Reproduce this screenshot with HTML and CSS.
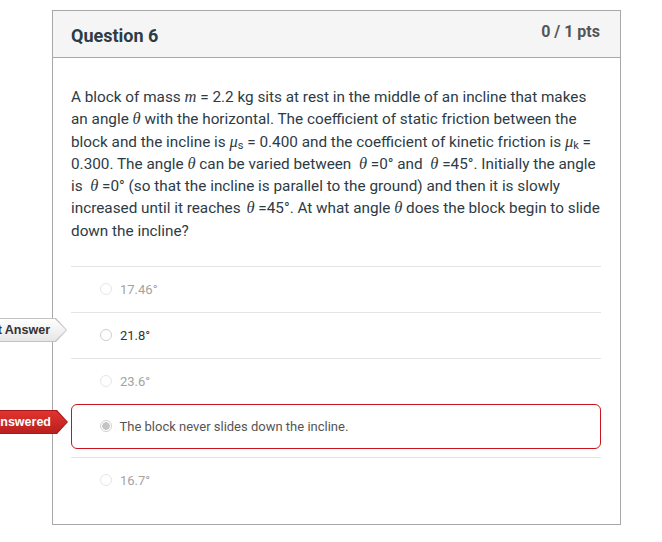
FILE: index.html
```html
<!DOCTYPE html>
<html>
<head>
<meta charset="utf-8">
<link rel="stylesheet" href="styles.css">
</head>
<body>
<div class="card">
  <div class="card-header">
    <h2 class="q-title">Question 6</h2>
    <div class="q-points">0 / 1 pts</div>
  </div>
  <div class="card-body">
    <p class="q-text">A block of mass <span class="mi">m</span> = 2.2 kg sits at rest in the middle of an incline that makes an angle <span class="mi">θ</span> with the horizontal. The coefficient of static friction between the block and the incline is <span class="mi">μ<sub>s</sub></span> = 0.400 and the coefficient of kinetic friction is <span class="mi">μ<sub>k</sub></span> = 0.300. The angle <span class="mi">θ</span> can be varied between &nbsp;<span class="mi">θ</span> =0° and &nbsp;<span class="mi">θ</span> =45°. Initially the angle is &nbsp;<span class="mi">θ</span> =0° (so that the incline is parallel to the ground) and then it is slowly increased until it reaches <span class="mi gap">θ</span> =45°. At what angle <span class="mi">θ</span> does the block begin to slide down the incline?</p>
    <div class="answers">
      <div class="answer faded"><span class="radio"></span><span class="label">17.46°</span></div>
      <div class="answer correct">
        <div class="tag tag-correct"><div class="tag-inner">Correct Answer</div></div>
        <span class="radio"></span><span class="label">21.8°</span>
      </div>
      <div class="answer faded"><span class="radio"></span><span class="label">23.6°</span></div>
      <div class="answer selected">
        <div class="tag tag-wrong"><div class="tag-inner">You Answered</div></div>
        <span class="radio checked"></span><span class="label">The block never slides down the incline.</span>
      </div>
      <div class="answer faded after-selected"><span class="radio"></span><span class="label">16.7°</span></div>
    </div>
  </div>
</div>
</body>
</html>
```
FILE: styles.css
```css
html, body {
  margin: 0;
  padding: 0;
  background: #fff;
  overflow: hidden;
}
body {
  font-family: Roboto, "Liberation Sans", sans-serif;
  color: #2d3b45;
}
.card {
  margin: 10px 0 0 52px;
  width: 567px;
  border: 1px solid #a8a8a8;
  background: #fff;
}
.card-header {
  height: 46px;
  background: #f5f5f5;
  border-bottom: 1px solid #a8a8a8;
  display: flex;
  justify-content: space-between;
  padding: 0 20px 0 18px;
}
.q-title {
  margin: 0;
  font-size: 18px;
  font-weight: 700;
  color: #2d3b45;
  line-height: 20px;
  padding-top: 15px;
}
.q-points {
  font-size: 16px;
  font-weight: 700;
  color: #555;
  line-height: 18px;
  padding-top: 12px;
}
.card-body {
  padding: 28px 19px 21px 18px;
}
.q-text {
  margin: 0 -4px 0 0;
  font-size: 15.3px;
  line-height: 22.3px;
  color: #2d3b45;
}
.mi {
  font-family: "Liberation Serif", "DejaVu Serif", serif;
  font-style: italic;
  font-size: 16.5px;
  line-height: 1;
}
.mi.gap {
  margin-left: 2px;
}
.mi sub {
  font-size: 11px;
  font-style: normal;
  font-family: Roboto, sans-serif;
  vertical-align: -2px;
  line-height: 0;
}
.answers {
  margin-top: 24px;
}
.answer {
  position: relative;
  height: 45px;
  border-top: 1px solid #e4e4e4;
  display: flex;
  align-items: center;
  padding-left: 29px;
  font-size: 13px;
  color: #333;
}
.answer.faded .label {
  color: #a3a3a3;
}
.answer.faded .radio {
  border-color: #e6e6e6;
}
.answer.selected {
  height: 43px;
  border: 1.5px solid #c8141e;
  border-radius: 6px;
  padding-left: 27.5px;
  color: #555;
}
.answer.after-selected {
  margin-top: 8px;
}
.radio {
  width: 10px;
  height: 10px;
  border: 1px solid #cfcfcf;
  border-radius: 50%;
  background: #fff;
  margin-right: 8px;
  flex: none;
  position: relative;
  top: -1px;
}
.radio.checked {
  border-color: #d0d0d0;
  background: radial-gradient(circle, #c4c4c4 0 3.5px, #fff 4px);
}
.tag {
  position: absolute;
  left: -131px;
  top: 5px;
  width: 127px;
  height: 24px;
  clip-path: polygon(0 0, calc(100% - 11px) 0, 100% 50%, calc(100% - 11px) 100%, 0 100%);
}
.tag-correct {
  background: #c2c2c2;
}
.tag-wrong {
  top: 5px;
  background: #a51b1b;
}
.tag-inner {
  position: absolute;
  inset: 1px 1px 1px 0;
  clip-path: polygon(0 0, calc(100% - 11px) 0, 100% 50%, calc(100% - 11px) 100%, 0 100%);
  font-family: "Liberation Sans", Arial, sans-serif;
  font-weight: 700;
  font-size: 12.5px;
  line-height: 22px;
  text-align: right;
  padding-right: 16px;
  box-sizing: border-box;
  white-space: nowrap;
}
.tag-correct .tag-inner {
  background: linear-gradient(#ffffff, #e6e6e6);
  color: #333;
}
.tag-wrong .tag-inner {
  background: linear-gradient(#e0342e, #b92020);
  color: #fff;
}
```
